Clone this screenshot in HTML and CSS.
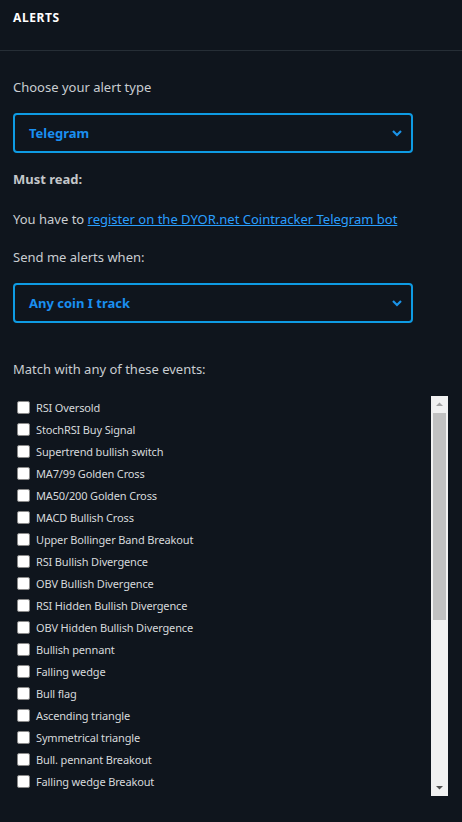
FILE: index.html
```html
<!DOCTYPE html>
<html>
<head>
<meta charset="utf-8">
<link rel="stylesheet" href="styles.css">
</head>
<body>
<div class="panel">
  <div class="header"><h1 class="title">ALERTS</h1></div>
  <div class="content">
    <p class="label first">Choose your alert type</p>
    <div class="select"><span class="select-text">Telegram</span><svg class="chev" width="12" height="8" viewBox="0 0 12 8"><path d="M2 2l4 4 4-4" fill="none" stroke="#1a93e8" stroke-width="2.2"/></svg></div>
    <p class="label bold">Must read:</p>
    <p class="label">You have to <a class="link" href="#">register on the DYOR.net Cointracker Telegram bot</a></p>
    <p class="label">Send me alerts when:</p>
    <div class="select"><span class="select-text">Any coin I track</span><svg class="chev" width="12" height="8" viewBox="0 0 12 8"><path d="M2 2l4 4 4-4" fill="none" stroke="#1a93e8" stroke-width="2.2"/></svg></div>
    <p class="label events">Match with any of these events:</p>
    <div class="list-wrap">
      <div class="list">
        <label class="item"><input type="checkbox"><span>RSI Oversold</span></label>
        <label class="item"><input type="checkbox"><span>StochRSI Buy Signal</span></label>
        <label class="item"><input type="checkbox"><span>Supertrend bullish switch</span></label>
        <label class="item"><input type="checkbox"><span>MA7/99 Golden Cross</span></label>
        <label class="item"><input type="checkbox"><span>MA50/200 Golden Cross</span></label>
        <label class="item"><input type="checkbox"><span>MACD Bullish Cross</span></label>
        <label class="item"><input type="checkbox"><span>Upper Bollinger Band Breakout</span></label>
        <label class="item"><input type="checkbox"><span>RSI Bullish Divergence</span></label>
        <label class="item"><input type="checkbox"><span>OBV Bullish Divergence</span></label>
        <label class="item"><input type="checkbox"><span>RSI Hidden Bullish Divergence</span></label>
        <label class="item"><input type="checkbox"><span>OBV Hidden Bullish Divergence</span></label>
        <label class="item"><input type="checkbox"><span>Bullish pennant</span></label>
        <label class="item"><input type="checkbox"><span>Falling wedge</span></label>
        <label class="item"><input type="checkbox"><span>Bull flag</span></label>
        <label class="item"><input type="checkbox"><span>Ascending triangle</span></label>
        <label class="item"><input type="checkbox"><span>Symmetrical triangle</span></label>
        <label class="item"><input type="checkbox"><span>Bull. pennant Breakout</span></label>
        <label class="item"><input type="checkbox"><span>Falling wedge Breakout</span></label>
        <label class="item"><input type="checkbox"><span>Bull flag Breakout</span></label>
      </div>
      <div class="scrollbar">
        <div class="sb-btn"><svg width="17" height="17" viewBox="0 0 17 17"><path d="M5 10h7L8.5 6.5z" fill="#a3a3a3"/></svg></div>
        <div class="sb-track"><div class="sb-thumb"></div></div>
        <div class="sb-btn"><svg width="17" height="17" viewBox="0 0 17 17"><path d="M5 7h7l-3.5 3.5z" fill="#505050"/></svg></div>
      </div>
    </div>
  </div>
</div>
</body>
</html>
```
FILE: styles.css
```css
* { box-sizing: border-box; }
html, body {
  margin: 0;
  padding: 0;
  background: #0f151d;
  height: 100%;
  overflow: hidden;
}
body {
  font-family: "Noto Sans", "Open Sans", sans-serif;
  color: #c9cdd1;
}
.header {
  height: 51px;
  border-bottom: 1px solid #262e36;
  padding: 9px 13px 0;
}
.title {
  margin: 0;
  font-size: 12px;
  font-weight: 700;
  color: #ffffff;
  letter-spacing: 0.6px;
}
.content {
  padding: 0 13px;
}
.label {
  margin: 0;
  font-size: 13px;
  line-height: 20px;
}
.first { padding-top: 26px; }
.select {
  width: 400px;
  height: 40px;
  border: 2px solid #0e9be3;
  border-radius: 4px;
  display: flex;
  align-items: center;
  justify-content: space-between;
  padding: 0 8px 0 14px;
}
.select-text {
  font-size: 13px;
  font-weight: 700;
  color: #1a8ff0;
}
.chev { display: block; }
.label + .select { margin-top: 16px; }
.bold { font-weight: 700; font-size: 13px; margin-top: 16px; color: #c4c7ca; }
.link { color: #2a9fff; text-decoration: underline; }
.label + .label { margin-top: 18px; }
.bold + .label { margin-top: 20px; }
.events { margin-top: 36px; }
.list-wrap {
  margin-top: 17px;
  width: 435px;
  height: 400px;
  display: flex;
}
.list {
  flex: 1;
  overflow: hidden;
}
.item {
  display: flex;
  align-items: center;
  height: 22px;
  font-size: 11px;
  letter-spacing: -0.15px;
  color: #d6d9dc;
}
.item input {
  appearance: none;
  -webkit-appearance: none;
  margin: 0 6px 0 4px;
  width: 13px;
  height: 13px;
  background: #ffffff;
  border: 1px solid #8a8a8a;
  border-radius: 2px;
  flex: none;
}
.scrollbar {
  width: 17px;
  background: #f1f1f1;
  display: flex;
  flex-direction: column;
}
.sb-btn { height: 17px; flex: none; }
.sb-btn svg { display: block; }
.sb-track { flex: 1; }
.sb-thumb {
  margin: 0 2px;
  height: 207px;
  background: #c1c1c1;
}
```
